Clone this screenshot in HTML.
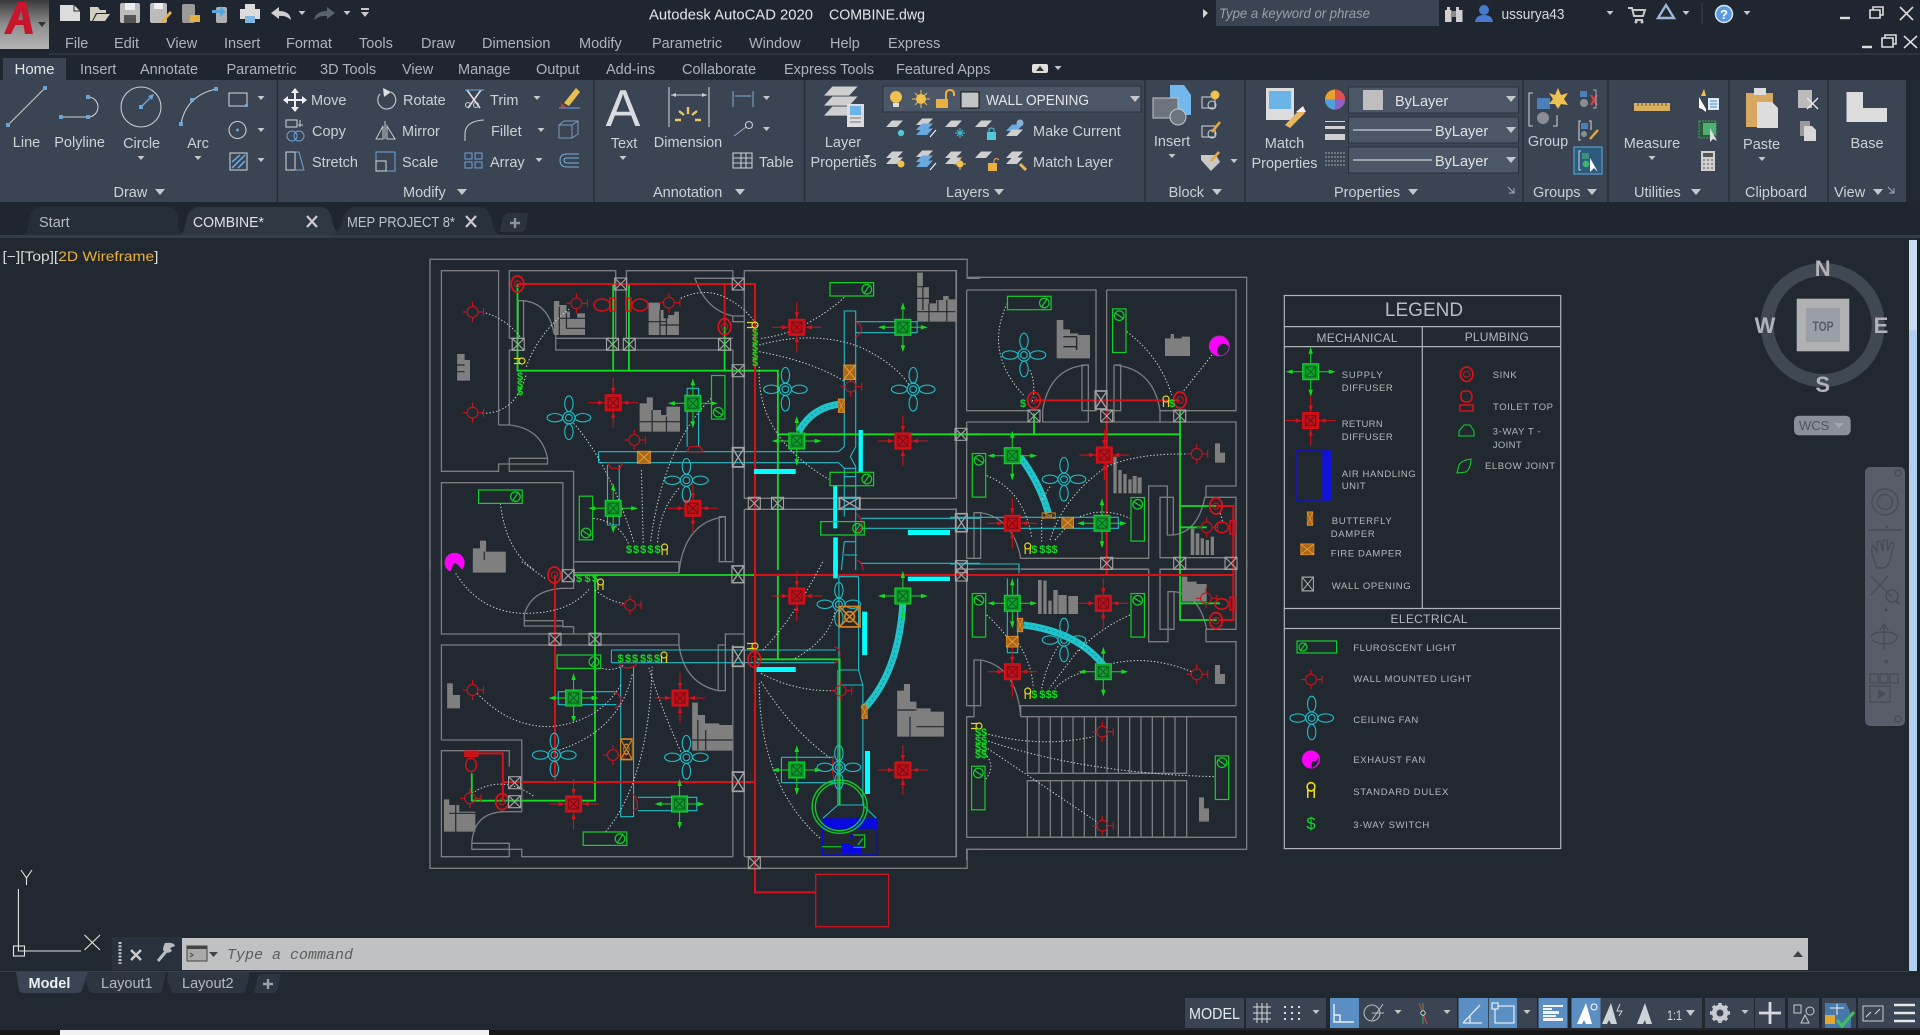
<!DOCTYPE html>
<html lang="en"><head><meta charset="utf-8"><title>Autodesk AutoCAD 2020 COMBINE.dwg</title>
<style>
html,body{margin:0;padding:0;background:#212830;width:1920px;height:1035px;overflow:hidden}
svg{display:block;font-family:"Liberation Sans",sans-serif}
.t{fill:#ccd1d6;font-size:14.5px}.m{text-anchor:middle}
.n{fill:#aeb4ba;font-size:14.5px}
.z *{vector-effect:non-scaling-stroke}
.w{fill:none;stroke:#7d7d80;stroke-width:1.3}
.d{fill:none;stroke:#d4d4d4;stroke-width:1;stroke-dasharray:1.4 2}
.c{fill:none;stroke:#20bcc6;stroke-width:1.1}
.r{fill:none;stroke:#d81018;stroke-width:2}
.g{fill:none;stroke:#12dc20;stroke-width:1.8}
.f{fill:#7f7f7f;stroke:none}
.b{fill:#00ffff;stroke:none}
.s{fill:#12dc20;font-size:11px;font-weight:bold;text-anchor:middle}
.l{fill:#b4b8bc;font-size:9.5px}
.h{fill:#b4b8bc;font-size:12px;text-anchor:middle}
.i{fill:none;stroke:#c8ccd0;stroke-width:1.1}
.u{fill:#3b4453}.a{fill:#5b8fc4}
</style></head><body>
<svg width="1920" height="1035" viewBox="0 0 1920 1035" xmlns="http://www.w3.org/2000/svg">
<defs>
<linearGradient id="lg" x1="0" y1="0" x2="0" y2="1"><stop offset="0" stop-color="#3a3a3c"/><stop offset=".5" stop-color="#8e8e8e"/><stop offset="1" stop-color="#b4b4b4"/></linearGradient>
<g id="ar"><path d="M-3.5,-2H3.5L0,2Z" fill="#c4c8cc"/></g>
<g id="al"><path d="M-5,-3H5L0,3Z" fill="#c4c8cc"/></g>
<g id="ds"><rect x="-8" y="-8" width="16" height="16" fill="#0fa02c" stroke="#12dc2c"/><path d="M-5,-5H5V5H-5ZM-5,-5L5,5M5,-5L-5,5" fill="none" stroke="#0c5c20"/><path d="M0,-8V-22M0,8V22M-8,0H-22M8,0H22" stroke="#12dc20" fill="none"/><path fill="#12dc20" d="M0,-25L-2.2,-18H2.2ZM0,25L-2.2,18H2.2ZM-25,0L-18,-2.2V2.2ZM25,0L18,-2.2V2.2Z"/></g>
<g id="rs"><rect x="-8" y="-8" width="16" height="16" fill="#c41018" stroke="#e01018"/><path d="M-5,-5H5V5H-5ZM-5,-5L5,5M5,-5L-5,5" fill="none" stroke="#701018"/><path d="M0,-8V-25M0,8V25M-8,0H-25M8,0H25" stroke="#d81018" fill="none"/><path fill="#d81018" d="M0,-9L-2.2,-15H2.2ZM0,9L-2.2,15H2.2ZM-9,0L-15,-2.2V2.2ZM9,0L15,-2.2V2.2Z"/></g>
<g id="fan" fill="none" stroke="#1fc0ca" stroke-width="1.1"><circle r="6"/><circle r="3.4"/><ellipse cy="-14" rx="4.2" ry="7.8"/><ellipse cy="14" rx="4.2" ry="7.8"/><ellipse cx="-14" rx="7.8" ry="4.2"/><ellipse cx="14" rx="7.8" ry="4.2"/></g>
<g id="wl" fill="none" stroke="#c8141e" stroke-width="1.1"><circle r="5.4"/><path d="M0,-10V-5M0,5V10M-10,0H-5M5,0H11M11,-4V4"/></g>
<g id="fl" fill="none" stroke="#12d028" stroke-width="1.2"><rect x="-21.8" y="-6.7" width="43.6" height="13.4"/><circle cx="15" r="4.8"/><path d="M12,4.5L18,-4.5"/></g>
<g id="wo" fill="none" stroke="#a4a4a4" stroke-width="1.1"><rect x="-6" y="-6" width="12" height="12"/><path d="M-6,-6L6,6M6,-6L-6,6"/></g>
<g id="fd"><rect x="-6.5" y="-6" width="13" height="12" fill="#a8681c" stroke="#e08820"/><path d="M-6.5,-6L6.5,6M6.5,-6L-6.5,6" stroke="#e8a030" fill="none"/></g>
<g id="fo" fill="none" stroke="#d88420" stroke-width="1"><rect x="-6.5" y="-6" width="13" height="12"/><path d="M-6.5,-6L6.5,6M6.5,-6L-6.5,6"/><circle r="3"/></g>
<g id="si" fill="none" stroke="#dc1018"><ellipse rx="6.3" ry="8" stroke-width="1.8"/><circle r="3.2"/></g>
<g id="du" fill="none" stroke="#e8d820" stroke-width="1.2"><circle cy="-3" r="3"/><path d="M-2.5,-2V5M2.5,-2V5"/></g>
<g id="lg1"><path d="M-5,-5H13L7,2H-11Z" fill="#cfcfcf"/></g>
<g id="lg2"><path d="M-3,-3.5H8L2,3H-9Z" fill="#cfcfcf"/></g>
<g id="lg4"><path d="M-3,-3.5H8L2,3H-9Z" fill="#6aa8e0"/></g>
</defs>

<!-- base -->
<rect width="1920" height="1035" fill="#212830"/>
<rect width="1920" height="80" fill="#1f2630"/>
<rect y="202" width="1920" height="33" fill="#1f2630"/>
<rect y="235" width="1920" height="3" fill="#333c49"/>
<line x1="49" y1="54" x2="1920" y2="54" stroke="#3a424e"/>

<!-- logo -->
<rect x="0" y="0" width="49" height="49" fill="url(#lg)"/>
<path d="M4,34L18,2H26L33,34H25L23.5,25H15.5L11,34ZM18,20H23L21.5,9Z" fill="#c8142c"/>
<path d="M38,22H46L42,27Z" fill="#333"/>

<!-- quick access -->
<path d="M60,5H74L80,11V21H60Z" fill="#dcdcdc"/><path d="M74,5V11H80" fill="none" stroke="#1f2630"/>
<path d="M90,7H98L100,10H106V13H96L92,21H90ZM97,14H110L105,21H93Z" fill="#d2d0c4"/>
<rect x="120" y="3" width="20" height="20" rx="2" fill="#bcbcbc"/><rect x="125" y="3" width="10" height="7" fill="#eee"/><rect x="124" y="15" width="12" height="8" fill="#555"/>
<rect x="150" y="3" width="17" height="20" rx="2" fill="#bcbcbc"/><rect x="154" y="3" width="9" height="6" fill="#eee"/><path d="M160,22L170,11L172,13L163,23Z" fill="#e8b040"/>
<rect x="182" y="4" width="13" height="19" rx="2" fill="#9a9a9a"/><path d="M190,15H200V22H190Z" fill="#e0b040"/>
<rect x="216" y="7" width="11" height="16" rx="2" fill="#b0b0b0"/><path d="M212,10H220V6L226,12L220,17V13H212Z" fill="#58a8e0"/>
<path d="M245,4H255V9H245ZM240,9H260V19H255V23H245V19H240Z" fill="#dcdcdc"/><rect x="245" y="16" width="10" height="7" fill="#7cb8e0"/>
<path d="M271,13L279,7V11Q290,11 291,20Q286,15 279,16V19Z" fill="#cfcfcf"/><use href="#ar" x="302" y="13"/>
<path d="M335,13L327,7V11Q316,11 314,20Q320,15 327,16V19Z" fill="#5a626c"/><use href="#ar" x="347" y="13"/>
<path d="M361,8H369V10H361ZM361,12H369L365,17Z" fill="#c8c8c8"/>

<!-- title -->
<text x="649" y="19.5" fill="#e4e6e8" font-size="15" textLength="164" lengthAdjust="spacingAndGlyphs">Autodesk AutoCAD 2020</text>
<text x="829" y="19.5" fill="#e4e6e8" font-size="15" textLength="96" lengthAdjust="spacingAndGlyphs">COMBINE.dwg</text>
<path d="M1203,9L1208,13L1203,18Z" fill="#d8d8d8"/>
<rect x="1216" y="0" width="223" height="26" fill="#3b4453"/>
<text x="1219" y="18" fill="#9aa0a8" font-size="14" font-style="italic" textLength="151" lengthAdjust="spacingAndGlyphs">Type a keyword or phrase</text>
<path d="M1447,7H1450V10H1451.5V22H1445V10H1447ZM1456,7H1459V10H1462.5V22H1456V10H1456Z" fill="#cfcfcf"/><rect x="1451" y="11" width="5" height="6" fill="#8a8a8a"/>
<circle cx="1484" cy="10" r="5" fill="#4a7ad0"/><path d="M1475,22Q1476,15 1484,15Q1492,15 1493,22Z" fill="#4a7ad0"/>
<text x="1501.5" y="19" fill="#d8dadc" font-size="14.5" textLength="63" lengthAdjust="spacingAndGlyphs">ussurya43</text>
<use href="#ar" x="1610" y="13"/>
<path d="M1628,8H1632L1634,16H1643L1645,10H1633M1635,20H1643" fill="none" stroke="#c8c8c8" stroke-width="2"/><circle cx="1636" cy="22" r="1.5" fill="#c8c8c8"/><circle cx="1642" cy="22" r="1.5" fill="#c8c8c8"/>
<path d="M1666,5L1674,18H1658Z" fill="none" stroke="#9fb4d8" stroke-width="2.4"/><use href="#ar" x="1686" y="13"/>
<line x1="1702" y1="3" x2="1702" y2="24" stroke="#3c4450"/>
<circle cx="1724" cy="14" r="8.5" fill="#5a9ae0" stroke="#d8e4f0" stroke-width="1.5"/><text x="1724" y="19" font-size="13" font-weight="bold" fill="#fff" text-anchor="middle">?</text>
<use href="#ar" x="1747" y="13"/>
<path d="M1840,18H1850" stroke="#dcdcdc" stroke-width="2.4"/>
<path d="M1870,10H1880V18H1870ZM1873,10V7H1883V15H1880" fill="none" stroke="#dcdcdc" stroke-width="1.6"/>
<path d="M1900,7L1913,20M1913,7L1900,20" stroke="#dcdcdc" stroke-width="1.6"/>
<path d="M1862,47H1872" stroke="#dcdcdc" stroke-width="2.4"/>
<path d="M1882,38H1893V47H1882ZM1885,38V35H1896V44H1893" fill="none" stroke="#dcdcdc" stroke-width="1.6"/>
<path d="M1904,36L1917,48M1917,36L1904,48" stroke="#dcdcdc" stroke-width="1.6"/>

<!-- menu -->
<text class="n" y="48"><tspan x="65">File</tspan><tspan x="114">Edit</tspan><tspan x="166">View</tspan><tspan x="224">Insert</tspan><tspan x="286">Format</tspan><tspan x="359">Tools</tspan><tspan x="421">Draw</tspan><tspan x="482">Dimension</tspan><tspan x="579">Modify</tspan><tspan x="652">Parametric</tspan><tspan x="749">Window</tspan><tspan x="830">Help</tspan><tspan x="888">Express</tspan></text>

<!-- ribbon tabs -->
<rect x="3" y="58" width="63" height="22" fill="#3b4453"/>
<text x="14.5" y="74" fill="#e4e6e8" font-size="15">Home</text>
<text class="n" y="74"><tspan x="80">Insert</tspan><tspan x="140">Annotate</tspan><tspan x="226.5">Parametric</tspan><tspan x="320">3D Tools</tspan><tspan x="402">View</tspan><tspan x="458">Manage</tspan><tspan x="536">Output</tspan><tspan x="606">Add-ins</tspan><tspan x="682">Collaborate</tspan><tspan x="784">Express Tools</tspan><tspan x="896">Featured Apps</tspan></text>
<rect x="1032" y="64" width="16" height="9" rx="2" fill="#e0e0e0"/><path d="M1036,71L1040,66L1044,71Z" fill="#333"/><use href="#ar" x="1058" y="68"/>

<!-- ribbon panels -->
<rect x="0" y="80" width="1906" height="122" class="u"/>
<path d="M277.5,80V202M594,80V202M804.5,80V202M1145,80V202M1245,80V202M1523,80V202M1608,80V202M1729,80V202M1828,80V202" stroke="#272e38" stroke-width="1.5"/>
<text class="t m" y="147"><tspan x="26.5">Line</tspan><tspan x="79.6">Polyline</tspan><tspan x="688">Dimension</tspan><tspan x="843">Layer</tspan><tspan x="1172" y="146">Insert</tspan><tspan x="1548" y="146">Group</tspan></text>
<text class="t m" y="148"><tspan x="141.6">Circle</tspan><tspan x="198">Arc</tspan><tspan x="624">Text</tspan><tspan x="1284.5">Match</tspan><tspan x="1652">Measure</tspan><tspan x="1761.6" y="149">Paste</tspan><tspan x="1867" y="148">Base</tspan></text>
<text class="t m" y="167"><tspan x="843.5">Properties</tspan><tspan x="1284.5" y="168">Properties</tspan></text>
<text class="t" y="105"><tspan x="311">Move</tspan><tspan x="403">Rotate</tspan><tspan x="490">Trim</tspan></text>
<text class="t" y="136"><tspan x="312">Copy</tspan><tspan x="402">Mirror</tspan><tspan x="491">Fillet</tspan><tspan x="1033">Make Current</tspan></text>
<text class="t" y="167"><tspan x="312">Stretch</tspan><tspan x="402">Scale</tspan><tspan x="490">Array</tspan><tspan x="759">Table</tspan><tspan x="1033">Match Layer</tspan></text>
<text class="t" y="197"><tspan x="113.5">Draw</tspan><tspan x="403">Modify</tspan><tspan x="653">Annotation</tspan><tspan x="946">Layers</tspan><tspan x="1168.6">Block</tspan><tspan x="1334">Properties</tspan><tspan x="1533">Groups</tspan><tspan x="1634">Utilities</tspan><tspan x="1745">Clipboard</tspan><tspan x="1834">View</tspan></text>
<use href="#al" x="160" y="192"/><use href="#al" x="462" y="192"/><use href="#al" x="740" y="192"/><use href="#al" x="999" y="192"/><use href="#al" x="1217" y="192"/><use href="#al" x="1413" y="192"/><use href="#al" x="1592" y="192"/><use href="#al" x="1696" y="192"/><use href="#al" x="1878" y="192"/>
<use href="#ar" x="141" y="158"/><use href="#ar" x="198" y="158"/><use href="#ar" x="623" y="158"/><use href="#ar" x="1172" y="156"/><use href="#ar" x="1652" y="158"/><use href="#ar" x="1762" y="159"/><use href="#ar" x="867" y="157"/>
<use href="#ar" x="261" y="98"/><use href="#ar" x="261" y="130"/><use href="#ar" x="261" y="160"/><use href="#ar" x="537" y="98"/><use href="#ar" x="541" y="130"/><use href="#ar" x="539" y="160"/><use href="#ar" x="766.5" y="98"/><use href="#ar" x="766.5" y="129"/><use href="#ar" x="1234" y="161"/>
<path d="M1508,187L1514,193M1509,193H1514V188M1888,187L1894,193M1889,193H1894V188" stroke="#aab" fill="none"/>

<!-- draw icons -->
<path d="M8,125L45,88" class="i"/><rect x="43" y="86" width="4" height="4" fill="#6ba4d8"/><rect x="6" y="123" width="4" height="4" fill="#6ba4d8"/>
<path d="M61,117H88A10,10 0 0 0 88,97" class="i"/><rect x="59" y="115" width="4" height="4" fill="#6ba4d8"/><rect x="86" y="115" width="4" height="4" fill="#6ba4d8"/><rect x="86" y="95" width="4" height="4" fill="#6ba4d8"/>
<circle cx="141" cy="107" r="20" class="i"/><path d="M141,107L153,95" stroke="#6ba4d8" stroke-width="1.4"/><rect x="139" y="105" width="4" height="4" fill="#6ba4d8"/><path d="M154,94L148,96L152,100Z" fill="#6ba4d8"/>
<path d="M181,124Q186,96 216,89" class="i"/><rect x="179" y="122" width="4" height="4" fill="#6ba4d8"/><rect x="190" y="98" width="4" height="4" fill="#6ba4d8"/><rect x="214" y="87" width="4" height="4" fill="#6ba4d8"/>
<rect x="229" y="93" width="18" height="13" class="i"/><rect x="245" y="104" width="3" height="3" fill="#6ba4d8"/>
<circle cx="237.5" cy="130" r="8.5" class="i"/><circle cx="237.5" cy="130" r="1.5" fill="#6ba4d8"/>
<rect x="230" y="153" width="17" height="17" class="i"/><path d="M232,168L245,155M232,162L240,155M238,168L245,161" stroke="#6ba4d8" stroke-width="1.6"/>
<!-- modify icons -->
<path d="M295,90V110M285,100H305" stroke="#eee" stroke-width="2"/><path d="M295,88L291,93H299ZM295,112L291,107H299ZM283,100L288,96V104ZM307,100L302,96V104Z" fill="#eee"/>
<rect x="286" y="120" width="11" height="7" class="i"/><circle cx="292" cy="136" r="5" fill="none" stroke="#6ba4d8"/><circle cx="299" cy="136" r="5" fill="none" stroke="#6ba4d8"/><path d="M300,120V127M298,125H303" stroke="#ccc"/>
<rect x="286" y="152" width="9" height="18" class="i"/><path d="M295,152H299L304,170H295" fill="none" stroke="#6ba4d8"/>
<path d="M391,92A9,9 0 1 1 380,94" class="i"/><path d="M383,88L391,92L384,97Z" fill="#ddd"/>
<path d="M385,121V139M383,139H376ZM383,126L376,139H383ZM387,126L395,139H387Z" fill="none" stroke="#c8ccd0"/>
<rect x="376" y="152" width="19" height="19" fill="none" stroke="#6ba4d8"/><rect x="376" y="161" width="10" height="10" class="i"/>
<path d="M467,90L480,108M481,90L468,108" stroke="#ddd" stroke-width="1.6"/><circle cx="468" cy="105" r="2.5" class="i"/><circle cx="476" cy="105" r="2.5" class="i"/><path d="M465,90H484" stroke="#6ba4d8"/>
<path d="M465,141V134Q465,121 484,120" class="i"/>
<g fill="none" stroke="#6ba4d8"><rect x="465" y="153" width="7" height="6"/><rect x="475" y="153" width="7" height="6"/><rect x="465" y="162" width="7" height="6"/><rect x="475" y="162" width="7" height="6"/></g>
<path d="M564,103L576,88L580,92L569,106Z" fill="#e8c050"/><path d="M561,103L566,107H561Z" fill="#d04030"/><path d="M559,108H580" stroke="#6ba4d8"/>
<path d="M559,125H572V138H559ZM559,125L564,121H578V134L572,138M572,125L578,121" fill="none" stroke="#7a9cc0"/>
<path d="M579,154H567Q560,154 560,160Q560,167 567,167H579M579,158H567Q564,158 564,160Q564,163 567,163H579" fill="none" stroke="#7ab0d8"/>
<!-- text -->
<text x="623" y="126" font-size="52" fill="#d8dce0" text-anchor="middle">A</text>
<!-- annotation -->
<path d="M669,87V127M709,87V127M671,95H707" class="i"/><path d="M671,95L676,93V97ZM707,95L702,93V97Z" fill="#ccc"/>
<g stroke="#e8c860" stroke-width="2.4"><path d="M688,107V114M679,111L684,115M697,111L692,115M675,120H681M695,120H701"/></g>
<path d="M733,91V107M753,91V107M735,96H751" stroke="#7ab0d8" fill="none"/>
<path d="M734,136L746,127" stroke="#9ab"/><circle cx="749" cy="125" r="3.5" class="i"/>
<g class="i"><rect x="733" y="153" width="19" height="15"/><path d="M733,158H752M733,163H752M741,153V168M746,153V168"/></g>
<!-- layers -->
<use href="#lg1" transform="translate(839.4,93) scale(1.4,1.3)"/><use href="#lg1" transform="translate(839.4,103) scale(1.4,1.3)"/><use href="#lg1" transform="translate(839.4,113) scale(1.4,1.3)"/>
<rect x="847" y="104" width="17" height="23" fill="#ddd"/><rect x="850" y="106" width="11" height="9" fill="#6ab4e8"/><path d="M850,118H861M850,122H861" stroke="#777"/>
<rect x="883" y="86" width="258" height="26" fill="#4b5667" stroke="#2b323d"/>
<circle cx="896" cy="97" r="6" fill="#f0c050"/><rect x="893" y="103" width="6" height="4" fill="#ddd"/>
<circle cx="921" cy="99" r="5" fill="#f0c050"/><path d="M921,90V108M912,99H930M915,93L927,105M927,93L915,105" stroke="#f0c050"/>
<rect x="936" y="99" width="12" height="9" fill="#e8b040"/><path d="M946,99V94Q946,90 950,90Q954,90 954,94V96" fill="none" stroke="#e8b040" stroke-width="2"/>
<rect x="961" y="92" width="18" height="16" fill="#c4c4c4" stroke="#111"/>
<text x="986" y="105" fill="#e4e6e8" font-size="14.5" textLength="103" lengthAdjust="spacingAndGlyphs">WALL OPENING</text>
<use href="#al" x="1135" y="99"/>
<use href="#lg2" x="895" y="124"/><circle cx="901" cy="133" r="3.2" fill="#50c8d8"/>
<use href="#lg2" x="925" y="122"/><use href="#lg4" x="925" y="127"/><use href="#lg4" x="925" y="132"/><path d="M930,137L936,130" stroke="#fff"/>
<use href="#lg2" x="954" y="124"/><path d="M960,128V138M955,133H965M957,130L963,136M963,130L957,136" stroke="#40c0d0"/>
<use href="#lg2" x="984" y="124"/><rect x="987" y="132" width="9" height="8" fill="#50c8d8"/><path d="M989,132V129Q991,127 994,129V132" stroke="#50c8d8" fill="none"/>
<use href="#lg4" x="1015" y="128"/><use href="#lg2" x="1015" y="133"/><circle cx="1020" cy="123" r="3.5" fill="#8ab0d8"/>
<use href="#lg2" x="895" y="155"/><use href="#lg2" x="895" y="161"/><circle cx="901" cy="164" r="3.5" fill="#f0c050"/>
<use href="#lg2" x="925" y="154"/><use href="#lg4" x="925" y="159"/><use href="#lg4" x="925" y="164"/><path d="M930,170L936,163" stroke="#fff"/>
<use href="#lg2" x="954" y="155"/><use href="#lg2" x="954" y="161"/><circle cx="960" cy="164" r="3.5" fill="#f0c050"/><path d="M960,158V170M954,164H966" stroke="#f0c050"/>
<use href="#lg2" x="984" y="155"/><rect x="988" y="163" width="9" height="8" fill="#e8b040"/><path d="M994,163V160Q996,157 999,160" stroke="#e8b040" fill="none"/>
<use href="#lg2" x="1015" y="155"/><use href="#lg2" x="1015" y="161"/><path d="M1020,164L1026,170" stroke="#e8b860" stroke-width="3"/>
<!-- block -->
<path d="M1170,85H1184L1191,95V115H1170Z" fill="#72b8ec"/><rect x="1153" y="98" width="25" height="20" fill="#6c7480" stroke="#c8c8c8"/><circle cx="1178" cy="117" r="8" fill="#6c7480" stroke="#c8c8c8"/>
<rect x="1202" y="97" width="13" height="11" class="i"/><circle cx="1212" cy="105" r="4" class="i"/><circle cx="1215" cy="95" r="4.5" fill="#f0c050"/>
<rect x="1202" y="126" width="13" height="11" class="i"/><circle cx="1212" cy="134" r="4" class="i"/><path d="M1212,132L1220,122" stroke="#e8a840" stroke-width="2.6"/>
<path d="M1201,155H1216L1220,162L1211,171L1201,160Z" fill="#c8c8c8"/><path d="M1211,161L1219,152" stroke="#e8a840" stroke-width="2.6"/>
<use href="#ar" x="1234" y="161"/>
<!-- match props -->
<rect x="1266" y="88" width="28" height="32" fill="#ddd"/><rect x="1269" y="91" width="22" height="18" fill="#6ab4e8"/><path d="M1285,125L1301,108L1305,113L1290,128Z" fill="#e8b860"/><path d="M1296,112L1303,106L1306,112Z" fill="#eee"/>
<!-- properties -->
<circle cx="1335" cy="99.5" r="10" fill="#e8a030"/><path d="M1335,99.5L1335,89.5A10,10 0 0 1 1345,99.5Z" fill="#e05050"/><path d="M1335,99.5L1345,99.5A10,10 0 0 1 1335,109.5Z" fill="#9060c8"/><path d="M1335,99.5L1335,109.5A10,10 0 0 1 1325,99.5Z" fill="#50a0e0"/>
<path d="M1325,121H1345V122H1325ZM1325,126H1345V129H1325ZM1325,134H1345V140H1325Z" fill="#d0d0d0"/>
<path d="M1325,153H1345M1325,157H1345M1325,161H1345M1325,165H1345" stroke="#9aa" stroke-dasharray="2 1"/>
<g fill="#4b5667" stroke="#2b323d"><rect x="1348.5" y="87" width="170" height="26"/><rect x="1348.5" y="117" width="170" height="26"/><rect x="1348.5" y="147" width="170" height="26"/></g>
<rect x="1363" y="90" width="20" height="20" fill="#bebebe"/>
<text x="1395" y="106" class="t" style="fill:#e0e2e4">ByLayer</text>
<text x="1435" y="136" class="t" style="fill:#e0e2e4">ByLayer</text><text x="1435" y="166" class="t" style="fill:#e0e2e4">ByLayer</text>
<path d="M1353,130H1432M1353,160H1432" stroke="#eee"/>
<use href="#al" x="1511" y="99"/><use href="#al" x="1511" y="130"/><use href="#al" x="1511" y="160"/>
<!-- groups -->
<path d="M1533,93H1529V126H1533M1553,126H1557V115" class="i"/><rect x="1537" y="98" width="13" height="11" fill="#4a80b8"/><circle cx="1543" cy="118" r="6" fill="#8a8e94"/>
<path d="M1558,88L1561,95L1568,93L1564,99L1568,105L1561,104L1558,109L1555,104L1549,104L1553,99L1549,93L1555,95Z" fill="#f0c050"/>
<rect x="1580" y="91" width="7" height="6" fill="#4a80b8"/><circle cx="1584" cy="103" r="4" fill="#8a8e94"/><path d="M1591,95L1597,105M1597,95L1591,105" stroke="#e04040" stroke-width="2"/><path d="M1593,90H1596V108H1593" fill="none" stroke="#aab"/>
<path d="M1581,121H1579V140H1581M1589,121H1591V130" class="i"/><rect x="1581" y="123" width="7" height="6" fill="#4a80b8"/><circle cx="1584" cy="134" r="3" fill="#8a8e94"/><path d="M1590,139L1598,130" stroke="#e8a840" stroke-width="2.4"/>
<rect x="1574" y="147" width="28" height="27" fill="#2c5a7c" stroke="#58b0e0"/><rect x="1582" y="153" width="7" height="6" fill="#3c9080"/><circle cx="1586" cy="164" r="3.4" fill="#44b070"/><path d="M1590,158V172L1594,168L1598,172Z" fill="#fff"/><path d="M1581,151H1579V170H1581" class="i"/>
<!-- utilities -->
<rect x="1634" y="103" width="36" height="8" fill="#d8b060"/><path d="M1638,103V106M1642,103V106M1646,103V106M1650,103V106M1654,103V106M1658,103V106M1662,103V106M1666,103V106" stroke="#6a5a30"/>
<path d="M1699,97L1706,109V112L1702,109L1699,108Z" fill="#fff"/><path d="M1704,89L1701,96H1706Z" fill="#f0c050"/><rect x="1708" y="98" width="11" height="12" fill="#dde8f0"/><path d="M1710,101H1717M1710,104H1717M1710,107H1717" stroke="#4a90d0"/>
<rect x="1699" y="121" width="17" height="17" fill="#2a5a3a" stroke="#40a060" stroke-dasharray="2 1"/><rect x="1703" y="123" width="13" height="12" fill="#4cae70"/><path d="M1710,128V142L1713,139L1717,141Z" fill="#ddd"/>
<rect x="1701" y="151" width="14" height="20" fill="#cfcfcf"/><rect x="1703" y="153" width="10" height="4" fill="#555"/><path d="M1703,160H1713M1703,164H1713M1703,168H1713" stroke="#555" stroke-dasharray="2 2"/>
<!-- clipboard -->
<rect x="1746" y="93" width="27" height="34" fill="#d8a860"/><rect x="1754" y="88" width="12" height="7" fill="#ddd"/><path d="M1757,102H1772L1778,108V128H1757Z" fill="#ddd"/>
<rect x="1798" y="90" width="14" height="18" fill="#bbb"/><path d="M1807,98L1818,109M1818,98L1807,109" stroke="#e8e8e8" stroke-width="1.4"/>
<rect x="1800" y="121" width="10" height="15" fill="#9a9a9a"/><path d="M1804,126H1812L1816,130V141H1804Z" fill="#d8d8d8"/>
<path d="M1846.5,92H1863V108H1887V122H1846.5Z" fill="#dcdcdc"/>

<!-- file tabs -->
<path d="M21,235Q27,235 28,225Q30,207 42,207H168Q178,207 178,220Q178,235 186,235Z" fill="#262e38"/>
<path d="M178,235Q184,235 186,222Q188,207 200,207H320Q330,207 332,220Q334,232 342,235Z" fill="#2f3743"/>
<path d="M332,235Q340,232 342,220Q346,207 356,207H478Q490,207 492,222Q494,232 500,235Z" fill="#29313c"/>
<path d="M501,225Q503,213 510,213H528L526,228Q525,232 520,232H500Z" fill="#2b333e"/>
<text y="227" font-size="14.5"><tspan x="39" fill="#b4bac0">Start</tspan><tspan x="193" fill="#dfe2e6" textLength="71" lengthAdjust="spacingAndGlyphs">COMBINE*</tspan><tspan x="347" fill="#bcc2c8" textLength="108" lengthAdjust="spacingAndGlyphs">MEP PROJECT 8*</tspan></text>
<path d="M307,216L317,227M317,216L307,227M466,216L476,227M476,216L466,227" stroke="#c8ccd0" stroke-width="2.2"/>
<path d="M515,218V228M510,223H520" stroke="#8a929c" stroke-width="2.4"/>

<!-- canvas label -->
<text x="2.5" y="261" font-size="13.5" fill="#d8dadc" textLength="156" lengthAdjust="spacingAndGlyphs">[−][Top][<tspan fill="#e8b040">2D Wireframe</tspan>]</text>

<!-- PLAN z4 -->
<g class="z" transform="translate(420,250) scale(.357143,.333333)">
<path class="w" d="M28,960V28H1532V85H1568"/>
<path class="w" d="M220,525V62H60V664H220V642H250V664H430V935H725M250,525H220M250,525Q340,535 357,625M250,625H357V642H250ZM250,525V300H275M250,265H290M250,265V62H548V265H380V300H876M380,265V165M578,265V62H876V85H770Q800,180 876,198H908V215H876V198M578,265H876M876,85V62M908,198V62H1502V745H908V215M876,300V935H838V800H855V935M855,800Q740,815 725,968M908,778V960M908,778H1502V960M275,152V265M290,152V265M275,152H290Q360,160 375,250M60,960V698H400V960"/>
<path class="f" d="M375,153H390V165H410V185H420V205H440V190H462V255H375ZM640,158H672V180H682V205H695V195H712V185H725V255H640ZM1392,68H1408V110H1425V160H1445V150H1465V138H1480V148H1500V215H1392ZM104,312H125V330H140V392H104ZM615,460H635V442H652V480H675V495H690V470H728V545H615ZM148,895H168V872H185V905H240V960H148Z"/>
<path d="M390,170V255M390,205H462M410,190V235H462M672,180V255M640,215H690M690,205V255M672,225H725M1408,110V180M1392,110H1425M1392,145H1425M1425,160V215M1392,185H1500M1450,150V185M1475,150V215M650,480V545M615,515H728M690,500V545M104,345H125M104,365H125M180,905V960M148,935H240" stroke="#212830" stroke-width="1.2" fill="none"/>
<path class="c" d="M1188,590V183H1220V590M1220,215H1392V248H1220M500,605H1172M500,638H1172M500,605V638M1172,605L1188,590M1220,590L1205,620L1220,650V960M1172,638L1188,655V800M1180,960L1188,875M1188,655H1220M1188,680H1220M1188,708H1220M1188,745H1220M1188,775H1220M1188,875H1220M1188,915H1225M748,590V415H780V590M525,645V825H558V645M1235,805H1568M1235,835H1568M1235,940H1568"/>
<path d="M1220,215Q1238,225 1236,240Q1235,252 1220,262M748,605L755,590H785L792,605ZM525,640H568L560,655H535ZM1222,790Q1240,810 1238,835Q1236,830 1222,850M1225,930Q1242,945 1240,960" fill="none" stroke="#c81420" stroke-width="1.2"/>
<path class="g" d="M273,102V362H1002V960M541,102V362M585,102V362M853,230V362M1002,553H1568"/>
<path class="r" d="M273,102H938V960M853,102V230"/>
<path d="M1060,545Q1100,470 1178,462" fill="none" stroke="#22c4cc" stroke-width="7"/>
<path d="M1060,545Q1100,470 1178,462" fill="none" stroke="#0e9098" stroke-width="1" stroke-dasharray="2 3"/>
<path class="b" d="M1228,540H1240V668H1228ZM935,657H1052V672H935ZM1157,705H1168V835H1157ZM1157,862H1170V960H1157ZM1366,840H1484V855H1366Z"/>
<path class="d" d="M175,186Q240,205 280,260M175,490Q270,490 298,370M298,350Q330,250 420,175M730,145Q800,110 860,145Q920,180 945,230M955,265Q1000,260 1060,235M1075,225Q1140,190 1190,140M950,285Q1100,240 1230,290Q1330,340 1370,405M950,305Q1100,335 1190,395M950,350Q940,560 1145,688M430,520Q530,640 600,880M620,660L625,880M815,445Q680,590 645,880M725,715Q670,780 665,880M485,805Q560,815 585,885M225,760Q240,900 320,960"/>
</g>
<!-- PLAN z5 -->
<g class="z" transform="translate(420,560) scale(.357143,.333333)">
<path class="w" d="M28,0V925H1532V868H1568M60,0V222H430V200H400V182H292V198H400M292,198V165Q310,90 400,85H430V5H725V38H430M400,0V30M725,255V222H430M60,540V255H725M725,255Q740,370 835,392H855V222H908V890M835,392V255H855M876,255V890H285V868H250V890H60V572H250V620M60,540H285V755H232Q150,760 145,850H250V868H145V850M908,890H1502V0M908,0V222"/>
<path class="f" d="M148,0H240V38H148ZM76,370H92V405H112V445H76ZM762,428H778V465H798V490H838V495H875V572H762ZM1336,392H1355V372H1372V425H1390V445H1430V455H1467V530H1336ZM67,718H82V735H110V755H155V815H67Z"/>
<path d="M778,480V570M800,510V570M762,540H875M1336,450H1390M1390,500H1467M1372,470V530M82,760H155M100,735V815" stroke="#212830" stroke-width="1.2" fill="none"/>
<path class="c" d="M536,270H1165M536,308H1165M536,270V308M562,320V770H598V320M387,395H550M387,434H550M387,395V434M610,712H775V752H610M1012,592H1160M1012,668H1160M1012,592V668M1173,50V330M1228,50V330M1173,50H1228M1173,330H1228M1170,330V375M1228,330L1240,375M1170,375H1240M1170,375V735M1240,375V735M1170,735H1240M1170,735L1128,775M1240,735L1278,775"/>
<path d="M1160,260Q1178,265 1176,285Q1174,305 1160,310M545,395Q568,410 562,430Q556,440 545,445M596,702Q612,720 608,745L596,752M1160,585Q1150,620 1160,660M560,310H605Q608,320 580,324Q558,322 560,310Z" fill="none" stroke="#c81420" stroke-width="1.2"/>
<rect x="1127" y="775" width="153" height="30" fill="#0808e0"/>
<rect x="1127" y="805" width="153" height="80" fill="none" stroke="#0808d0" stroke-width="1.2"/>
<path d="M1180,850H1205V880H1180ZM1205,858H1235V880H1205ZM1205,825H1215V835H1205Z" fill="#0808e0"/>
<ellipse cx="1175" cy="740" rx="77" ry="80" fill="none" stroke="#12c828" stroke-width="1.4"/>
<ellipse cx="1175" cy="740" rx="68" ry="72" fill="none" stroke="#12c828" stroke-width="1.4"/>
<path d="M1213,825H1245V862H1213M1226,855L1240,835M1125,860H1180" fill="none" stroke="#12c828" stroke-width="1.2"/>
<path class="g" d="M430,45H1002V298M490,45V722H145V640M943,298H1175V735"/>
<path class="r" d="M938,0V997H1108M378,45V660M232,666H938M142,580H232V725M940,45H1568"/>
<rect x="1108" y="943" width="204" height="157" fill="none" stroke="#c81420" stroke-width="1.3"/>
<rect x="125" y="573" width="37" height="17" fill="#c81018" stroke="#e01018"/><ellipse cx="143" cy="615" rx="15" ry="20" fill="none" stroke="#d81018" stroke-width="1.4"/>
<path d="M1352,130Q1340,340 1240,450" fill="none" stroke="#22c4cc" stroke-width="7"/>
<path d="M1352,130Q1340,340 1240,450" fill="none" stroke="#0e9098" stroke-width="1" stroke-dasharray="2 3"/>
<path class="b" d="M1157,0H1170V55H1157ZM1366,50H1484V63H1366ZM1238,155H1252V285H1238ZM942,321H1052V336H942ZM1246,573H1260V702H1246Z"/>
<path class="d" d="M100,40Q170,160 295,160Q420,160 475,85M285,5L350,55M490,90Q530,125 570,130M160,400Q250,500 360,500Q500,490 565,370M390,570Q560,510 595,340M520,815Q640,660 650,320M730,575Q670,430 640,320M510,325Q540,335 570,315M960,270Q1050,170 1130,0M1050,295Q1160,230 1165,130M955,340Q1050,395 1160,392M955,365Q1040,510 1150,595M950,370Q950,670 1120,835M145,700Q230,640 320,710"/>
</g>
<!-- PLAN z6 -->
<g class="z" transform="translate(950,270) scale(.333333)">
<path class="w" d="M50,22H890V900M50,60H438V422H415V285H396V422H415V456H278V420Q300,290 415,285M50,60V422H238M50,456H238M50,456V865H92V728H72V865M92,728Q190,745 212,865H596V648H652V795H670V682H630V863H858V682H768V648H858V456H630V422M470,60H858V422H630Q610,295 492,285H512V422H492V285M470,60V422H492V456H630M670,795Q745,785 765,680M50,897H210M212,897H596M630,897H858M18,0V680M18,715V900"/>
<path class="f" d="M320,150H340V178H360V190H385V195H420V265H320ZM645,205H662V192H672V205H695V200H720V258H645ZM795,520H810V548H825V578H795ZM490,560H500V670H490ZM505,600H515V670H505ZM520,612H530V670H520ZM535,628H545V670H535ZM548,618H560V670H548ZM563,622H575V670H563ZM722,775H733V855H722ZM737,790H748V855H737ZM752,805H762V855H752ZM767,810H777V855H767ZM782,800H792V855H782Z"/>
<path d="M340,200H380M340,230H380M380,200V240" stroke="#212830" stroke-width="1.4" fill="none"/>
<path class="c" d="M0,742H505V775H0M0,882H207V897"/>
<path class="g" d="M0,493H690M252,430V493M690,420V900M690,708H798M690,772H770"/>
<path class="r" d="M252,391H690M470,391V900M798,708H850V900M850,772"/>
<rect x="840" y="752" width="16" height="40" fill="none" stroke="#d81018" stroke-width="1.6"/><ellipse cx="815" cy="772" rx="20" ry="16" fill="none" stroke="#d81018" stroke-width="1.6"/>
<path d="M210,560Q270,640 295,730" fill="none" stroke="#22c4cc" stroke-width="7"/>
<path d="M210,560Q270,640 295,730" fill="none" stroke="#0e9098" stroke-width="1" stroke-dasharray="2 3"/>
<path class="d" d="M172,100Q100,250 225,380M240,300Q260,350 245,400M530,185Q630,260 665,375M695,370L790,250M110,617Q220,660 245,800M300,650L275,690M275,750L275,820M300,810Q340,680 470,590Q560,550 710,552M315,810L350,770M390,740Q460,710 540,745M810,730Q820,750 815,760"/>
</g>
<!-- PLAN z7 -->
<g class="z" transform="translate(950,560) scale(.333333)">
<path class="w" d="M890,0V868H50V900M18,0V890M50,28V437H92V300H72V437M92,300Q200,320 212,470V437H858M72,437V470H50V832H858V470H212M212,28H596V245H654V95H672V208H630V28H858V208H768V245H858V437M50,28H72M672,95Q750,105 770,208"/>
<path class="w" d="M232,470V640H710V470M232,662H710V832H232ZM267,470V640M301,470V640M335,470V640M369,470V640M403,470V640M437,470V640M471,470V640M505,470V640M539,470V640M573,470V640M607,470V640M641,470V640M675,470V640M267,662V832M301,662V832M335,662V832M369,662V832M403,662V832M437,662V832M471,662V832M505,662V832M539,662V832M573,662V832M607,662V832M641,662V832M675,662V832"/>
<path class="f" d="M695,50H712V65H740V72H770V125H695ZM795,315H810V342H825V372H795ZM747,712H762V745H777V785H747ZM264,60H275V162H264ZM280,62H290V162H280ZM295,122H305V162H295ZM310,90H323V162H310ZM325,105H350V162H325ZM355,108H384V162H355Z"/>
<path class="c" d="M0,12H207V40M172,55V278H203V55"/>
<path class="g" d="M690,0V180H800M690,130H810"/>
<path class="r" d="M0,45H850V180H810M470,0V45M850,0V45"/>
<rect x="840" y="112" width="16" height="38" fill="none" stroke="#d81018" stroke-width="1.6"/><ellipse cx="815" cy="132" rx="20" ry="16" fill="none" stroke="#d81018" stroke-width="1.6"/>
<path d="M220,195Q380,215 460,315" fill="none" stroke="#22c4cc" stroke-width="7"/>
<path d="M220,195Q380,215 460,315" fill="none" stroke="#0e9098" stroke-width="1" stroke-dasharray="2 3"/>
<path class="d" d="M110,165Q160,210 190,260M205,250Q245,310 250,385M330,250Q290,310 275,385M385,270L298,385M405,335Q350,350 315,385M490,310Q600,285 725,335M540,165Q440,210 385,275M105,520Q270,565 430,530M105,540Q400,640 795,650M105,560L440,785M105,580Q140,620 105,660"/>
</g>

<!-- plan symbols -->
<g>
<use href="#ds" x="902.9" y="327.3"/><use href="#ds" x="796.8" y="441"/><use href="#ds" x="692.9" y="403.3"/><use href="#ds" x="613.2" y="508.3"/><use href="#ds" x="573.6" y="698"/><use href="#ds" x="679.6" y="804"/><use href="#ds" x="902.9" y="596"/><use href="#ds" x="796.8" y="770"/><use href="#ds" x="1012.3" y="455.7"/><use href="#ds" x="1102" y="523.3"/><use href="#ds" x="1012.3" y="603.3"/><use href="#ds" x="1103.3" y="671.7"/>
<use href="#rs" x="796.8" y="327.3"/><use href="#rs" x="613.2" y="402.7"/><use href="#rs" x="902.9" y="441"/><use href="#rs" x="692.9" y="508.3"/><use href="#rs" x="796.8" y="596"/><use href="#rs" x="680" y="698"/><use href="#rs" x="573.6" y="804"/><use href="#rs" x="902.9" y="770"/><use href="#rs" x="1104.3" y="455"/><use href="#rs" x="1012.3" y="523.3"/><use href="#rs" x="1103.3" y="603.3"/><use href="#rs" x="1012.3" y="671.7"/>
<use href="#fan" x="785.4" y="389.3"/><use href="#fan" x="913.2" y="389.3"/><use href="#fan" x="568.9" y="417.7"/><use href="#fan" x="686.4" y="480.3"/><use href="#fan" x="838.9" y="604.3"/><use href="#fan" x="838.9" y="767.3"/><use href="#fan" x="554.3" y="755"/><use href="#fan" x="686.4" y="757.3"/><use href="#fan" x="1024" y="355"/><use href="#fan" x="1064" y="479.3"/><use href="#fan" x="1064" y="640"/>
<use href="#wl" x="472.5" y="312"/><use href="#wl" x="472.5" y="412.7"/><use href="#wl" x="576.4" y="303.3"/><use href="#wl" x="668.9" y="302.7"/><use href="#wl" x="634.3" y="440"/><use href="#wl" x="850.7" y="386.7"/><use href="#wl" x="630" y="605"/><use href="#wl" x="472.5" y="690"/><use href="#wl" x="612.9" y="755"/><use href="#wl" x="840.7" y="690.7"/><use href="#wl" x="470" y="798.3"/><use href="#wl" x="1196.7" y="454"/><use href="#wl" x="1206.7" y="527.3"/><use href="#wl" x="1102.3" y="731.7"/><use href="#wl" x="1102.3" y="825.7"/><use href="#wl" x="1196.7" y="674.3"/><use href="#wl" x="1206" y="598.3"/>
<use href="#fl" x="851.8" y="289.3"/><use href="#fl" x="500.4" y="496.7"/><use href="#fl" x="851.8" y="479"/><use href="#fl" x="842.5" y="528.3"/><use href="#fl" transform="translate(718.2,397.3) rotate(90)"/><use href="#fl" transform="translate(586,518) rotate(90)"/><use href="#fl" x="578.9" y="661.7"/><use href="#fl" x="605" y="838.7"/><use href="#fl" x="1029.3" y="303"/>
<use href="#fl" transform="translate(1119.3,330.7) rotate(-90)"/><use href="#fl" transform="translate(979,475.3) rotate(-90)"/><use href="#fl" transform="translate(1137.7,519.3) rotate(-90)"/><use href="#fl" transform="translate(979,615.3) rotate(-90)"/><use href="#fl" transform="translate(1137.7,615.3) rotate(-90)"/><use href="#fl" transform="translate(978.3,788) rotate(-90)"/><use href="#fl" transform="translate(1222,777.7) rotate(-90)"/>
<use href="#si" x="517.5" y="284"/><use href="#si" x="724.6" y="326.7"/><use href="#si" x="554.3" y="575"/><use href="#si" x="754.3" y="659.3"/><use href="#si" x="502.1" y="801.7"/><use href="#si" x="1034" y="400.3"/><use href="#si" x="1180" y="400"/><use href="#si" x="1216" y="506"/><use href="#si" x="1216" y="620.7"/>
<use href="#wo" x="620.7" y="284"/><use href="#wo" x="738.2" y="284"/><use href="#wo" x="518.2" y="344.3"/><use href="#wo" x="612.5" y="344.3"/><use href="#wo" x="629.3" y="344.3"/><use href="#wo" x="724.6" y="344.3"/><use href="#wo" x="738.2" y="370.7"/><use href="#wo" transform="translate(738.2,457.3) scale(1,1.6)"/><use href="#wo" x="754.3" y="503.3"/><use href="#wo" x="777.5" y="503.3"/><use href="#wo" transform="translate(849.6,503.3) scale(1.7,1)"/><use href="#wo" x="961" y="434.3"/><use href="#wo" transform="translate(961.4,522.7) scale(1,1.5)"/><use href="#wo" x="568.2" y="575.7"/><use href="#wo" transform="translate(737.9,574.3) scale(1,1.4)"/><use href="#wo" x="555" y="639.3"/><use href="#wo" x="595" y="639.3"/><use href="#wo" transform="translate(738.2,656.7) scale(1,1.6)"/><use href="#wo" x="514.6" y="782.7"/><use href="#wo" x="514.6" y="801.7"/><use href="#wo" transform="translate(738.2,781.7) scale(1,1.6)"/><use href="#wo" x="754.3" y="862.7"/><use href="#wo" x="961.4" y="566.7"/><use href="#wo" x="961.4" y="575"/><use href="#wo" x="1034" y="416"/><use href="#wo" transform="translate(1101,400) scale(1,1.5)"/><use href="#wo" x="1106.7" y="416"/><use href="#wo" x="1179.7" y="416"/><use href="#wo" x="1106.7" y="563.3"/><use href="#wo" x="1179.7" y="563.3"/><use href="#wo" x="1231" y="563.3"/>
<use href="#fd" x="643.9" y="457.3"/><use href="#fd" transform="translate(849.6,372.3) scale(.9,1.2)"/><use href="#fd" transform="translate(841.4,405.7) scale(.5,1.1)"/><use href="#fo" transform="translate(626.4,749.3) scale(.9,1.7)"/><use href="#fo" transform="translate(849.6,616.7) scale(1.6,1.7)"/><use href="#fd" transform="translate(864.6,711.7) scale(.45,1.1)"/><use href="#fo" transform="translate(1048.7,515.7) scale(1,.5)"/><use href="#fd" transform="translate(1067.7,522.7) scale(.9,.9)"/><use href="#fd" transform="translate(1012.3,641.7) scale(.9,.9)"/><use href="#fd" transform="translate(1020,625) scale(.45,1.1)"/>
<!-- toilets -->
<g fill="none" stroke="#d81018" stroke-width="1.5"><ellipse cx="602" cy="305" rx="8" ry="6"/><rect x="610" y="298" width="5" height="13"/><rect x="626" y="298" width="5" height="13"/><ellipse cx="640" cy="305" rx="8" ry="6"/></g>
<!-- exhaust -->
<circle cx="454.6" cy="562.7" r="10" fill="#ff00ff"/><path d="M454.6,562.7Q460,566 462,570Q456,576 450,572Q452,566 454.6,562.7Z" fill="#212830"/>
<circle cx="1219.3" cy="346" r="10" fill="#ff00ff"/><path d="M1219,346Q1224,341 1229,347Q1228,354 1222,356Q1214,354 1219,346Z" fill="#212830"/><circle cx="1219.3" cy="346" r="10" fill="none" stroke="#a030b0"/>
<!-- switches -->
<text class="s" y="553"><tspan x="629">$</tspan><tspan x="636">$</tspan><tspan x="643.2">$</tspan><tspan x="650.4">$</tspan><tspan x="657.5">$</tspan></text><use href="#du" x="664.6" y="550"/>
<text class="s" y="582"><tspan x="579">$</tspan><tspan x="587.5">$</tspan><tspan x="595">$</tspan></text><use href="#du" x="600.5" y="585"/>
<text class="s" y="662"><tspan x="620.5">$</tspan><tspan x="628">$</tspan><tspan x="635">$</tspan><tspan x="643">$</tspan><tspan x="649.5">$</tspan><tspan x="657">$</tspan></text><use href="#du" x="664" y="658"/>
<text class="s"><tspan x="520" y="380">$</tspan><tspan x="520" y="388">$</tspan><tspan x="520" y="395">$</tspan></text>
<text class="s"><tspan x="755" y="336">$</tspan><tspan x="755" y="344">$</tspan><tspan x="755" y="351">$</tspan><tspan x="755" y="359">$</tspan><tspan x="755" y="366">$</tspan></text>
<use href="#du" transform="translate(752,325) rotate(90)"/><use href="#du" transform="translate(519,361) rotate(90)"/><use href="#du" transform="translate(752,646) rotate(90)"/>
<text class="s" y="407" ><tspan x="1023">$</tspan><tspan x="1172">$</tspan></text><use href="#du" x="1166" y="402"/>
<text class="s" y="553"><tspan x="1034.3">$</tspan><tspan x="1042.3">$</tspan><tspan x="1048.7">$</tspan><tspan x="1054.7">$</tspan></text><use href="#du" x="1027.7" y="549"/>
<text class="s" y="698"><tspan x="1034.3">$</tspan><tspan x="1042.3">$</tspan><tspan x="1048.7">$</tspan><tspan x="1054.7">$</tspan></text><use href="#du" x="1027.7" y="694"/>
<use href="#du" transform="translate(976,726) rotate(90)"/>
<text class="s"><tspan x="978" y="736">$</tspan><tspan x="984" y="736">$</tspan><tspan x="978" y="744">$</tspan><tspan x="984" y="744">$</tspan><tspan x="978" y="751">$</tspan><tspan x="984" y="751">$</tspan><tspan x="978" y="758">$</tspan><tspan x="984" y="758">$</tspan></text>
</g>

<!-- LEGEND -->
<g fill="none" stroke="#b0b4b8" stroke-width="1.2"><rect x="1284.3" y="295.5" width="276.4" height="553.1"/><path d="M1284,326.6H1561M1284,346.6H1561M1284,608.5H1561M1284,628.5H1561M1422.3,326.6V608.5"/></g>
<text x="1424" y="316" fill="#b8bcc0" font-size="19" text-anchor="middle">LEGEND</text>
<text class="h" y="341.8" x="1357" textLength="81">MECHANICAL</text>
<text class="h" y="341" x="1496.7" textLength="64">PLUMBING</text>
<text class="h" y="623" x="1429" textLength="77">ELECTRICAL</text>
<g class="l">
<text x="1341.7" y="378" textLength="41">SUPPLY</text><text x="1341.7" y="391" textLength="51">DIFFUSER</text>
<text x="1341.7" y="426.9" textLength="41">RETURN</text><text x="1341.7" y="440.2" textLength="51">DIFFUSER</text>
<text x="1341.7" y="477" textLength="74">AIR HANDLING</text><text x="1341.7" y="489" textLength="24">UNIT</text>
<text x="1331.7" y="524.2" textLength="60">BUTTERFLY</text><text x="1330.7" y="537" textLength="44">DAMPER</text>
<text x="1330.7" y="556.4" textLength="71">FIRE DAMPER</text><text x="1331.7" y="589" textLength="79">WALL OPENING</text>
<text x="1492.7" y="378" textLength="24">SINK</text><text x="1493" y="410" textLength="60">TOILET TOP</text>
<text x="1492.7" y="434.6" textLength="48">3-WAY T -</text><text x="1492.7" y="448" textLength="29">JOINT</text>
<text x="1485" y="469" textLength="70">ELBOW JOINT</text>
<text x="1353.3" y="651" textLength="103">FLUROSCENT LIGHT</text><text x="1353.3" y="682" textLength="118">WALL MOUNTED LIGHT</text>
<text x="1353.3" y="722.9" textLength="65">CEILING FAN</text><text x="1353.3" y="763" textLength="72">EXHAUST FAN</text>
<text x="1353.3" y="795" textLength="95">STANDARD DULEX</text><text x="1353.3" y="828" textLength="76">3-WAY SWITCH</text>
</g>
<use href="#ds" x="1310.7" y="371.7"/><use href="#rs" x="1310.7" y="420.6"/>
<rect x="1296" y="451" width="35" height="49" fill="none" stroke="#1010d0" stroke-width="1.4"/><rect x="1322.3" y="451" width="8.7" height="49" fill="#1010d8"/>
<use href="#fd" transform="translate(1310,518.6) scale(.45,1.1)"/><use href="#fd" transform="translate(1307.3,549.3) scale(1,.9)"/>
<use href="#wo" transform="translate(1307.7,584) scale(.95,1.15)"/>
<use href="#si" transform="translate(1466.7,374.3) scale(1,.9)"/>
<path d="M1461,394Q1461,391 1466.7,391Q1472,391 1472,397Q1472,402 1466.7,402Q1461,402 1461,397ZM1460,405H1473V411H1460Z" fill="none" stroke="#dc1018" stroke-width="1.6"/>
<path d="M1459,436V431L1464,425H1470L1474,431V436Z" fill="none" stroke="#12d028" stroke-width="1.1"/>
<path d="M1457,473L1459,465Q1462,460 1471,459Q1471,468 1466,472L1457,473Z" fill="none" stroke="#12d028" stroke-width="1.1"/>
<g fill="none" stroke="#12d028" stroke-width="1.2"><rect x="1297" y="641" width="39.6" height="12"/><circle cx="1303" cy="647" r="4"/><path d="M1300,651L1306,643"/></g>
<use href="#wl" x="1311" y="679.6"/><use href="#fan" x="1311.7" y="718"/>
<circle cx="1311" cy="759.5" r="9" fill="#ff00ff"/><path d="M1313,761Q1317,762 1319,757Q1319,765 1312,768Q1310,764 1313,761Z" fill="#212830"/>
<use href="#du" transform="translate(1311,791) scale(1.3,1.4)"/>
<text x="1311" y="829" class="s" style="font-size:17px;font-weight:normal">$</text>

<!-- UCS -->
<g fill="none" stroke="#e4e4e4" stroke-width="1.1">
<path d="M18.4,889V951H81"/><rect x="13.5" y="946" width="11" height="10"/>
<path d="M21,870L26.5,878L32,870M26.5,878V885M84.5,935L100,950M100,935L84.5,950"/>
</g>

<!-- viewcube -->
<circle cx="1822.7" cy="325" r="55.5" fill="none" stroke="#404852" stroke-width="13"/>
<rect x="1796.7" y="298.7" width="52.6" height="52.6" fill="#b0b1b2"/><rect x="1806" y="308" width="34" height="34" fill="#9a9ea6"/>
<text x="1823" y="331" font-size="13.5" font-weight="bold" fill="#555e68" text-anchor="middle" textLength="21" lengthAdjust="spacingAndGlyphs">TOP</text>
<g font-size="22" font-weight="bold" fill="#b0b4b8" text-anchor="middle"><text x="1822.7" y="276">N</text><text x="1765" y="333">W</text><text x="1881" y="333">E</text><text x="1822.7" y="392">S</text></g>
<rect x="1794" y="415.7" width="56.7" height="19.6" rx="5" fill="#8a8f9a"/><text x="1799" y="430" font-size="13" fill="#4e5560">WCS</text><path d="M1834,423H1844L1839,428Z" fill="#a4a8b0"/>

<!-- nav bar -->
<rect x="1865" y="467" width="40" height="259" rx="5" fill="#575e69"/>
<g fill="none" stroke="#464d57" stroke-width="1.4">
<circle cx="1898" cy="473" r="3"/><circle cx="1898" cy="719" r="3"/>
<circle cx="1885" cy="502" r="13"/><circle cx="1885" cy="502" r="7.5"/>
<path d="M1868,530H1902M1874,560Q1870,548 1873,545L1877,552V542L1880,541L1883,551V540L1887,540L1888,551L1891,542L1894,544L1891,555Q1889,568 1883,568H1877Z"/>
<path d="M1871,576L1892,597M1888,576L1871,595"/><circle cx="1892" cy="596" r="6"/><path d="M1896,601L1899,604" stroke-width="2.4"/>
<path d="M1884,626V650M1880,630L1884,624L1888,630M1871,637Q1872,632 1884,632Q1896,632 1897,637Q1896,644 1884,644Q1876,643 1872,640"/>
<rect x="1870" y="674" width="8" height="9"/><rect x="1880" y="674" width="8" height="9"/><rect x="1890" y="674" width="8" height="9"/><rect x="1870" y="686" width="20" height="16"/>
</g>
<path d="M1886,607L1884,611H1888ZM1886,664L1884,660H1888ZM1885,526H1889L1887,529ZM1885,660H1889L1887,663ZM1878,689L1886,694L1878,699Z" fill="#464d57"/>

<!-- right blue strip -->
<rect x="1909" y="240" width="8" height="731" fill="#b0d0ee"/>
<rect x="1909" y="240" width="8" height="90" fill="#c8dcf2"/>
<rect x="1917" y="238" width="3" height="733" fill="#1a2028"/>

<!-- command line -->
<rect x="112" y="937" width="70" height="33" fill="#29313c"/>
<path d="M120,942V964" stroke="#c8c8c8" stroke-width="3" stroke-dasharray="2 1.4"/>
<path d="M131,950L141,960M141,950L131,960" stroke="#c8ccd0" stroke-width="2.4"/>
<path d="M158,961L168,949" stroke="#b8bcc0" stroke-width="3"/><path d="M165,943Q174,942 175,946L170,948L172,951Q167,955 163,950Q163,947 165,943Z" fill="#b8bcc0"/>
<rect x="182" y="938" width="1626" height="32" fill="#bfc1c2"/>
<rect x="187" y="946" width="20" height="15" fill="#aaa" stroke="#444"/><rect x="187" y="946" width="20" height="3" fill="#444"/><path d="M190,953L193,955L190,957" stroke="#444" fill="none"/>
<path d="M209,952H218L213.5,957Z" fill="#444"/>
<text x="227" y="959" font-family="Liberation Mono" font-style="italic" font-size="15" fill="#5c5c5c">Type a command</text>
<path d="M1793,957H1803L1798,951Z" fill="#444"/>
<rect y="971" width="1909" height="1" fill="#3a424e"/>

<!-- layout tabs -->
<path d="M16,972H88L82,990Q81,993 76,993H24Q20,993 19,990Z" class="u"/>
<path d="M88,972H166L162,990Q161,993 156,993H94Q90,993 89,990L85,980Z" fill="#2d3541"/>
<path d="M168,972H250L246,990Q245,993 240,993H176Q172,993 171,990L167,980Z" fill="#2d3541"/>
<path d="M258,976Q259,974 264,974H281L278,988Q277,993 272,993H254Z" fill="#2d3541"/>
<text x="28.5" y="988" font-size="14.5" font-weight="bold" fill="#eef0f2">Model</text>
<text y="988" font-size="14.5" fill="#b4bac0"><tspan x="101">Layout1</tspan><tspan x="182">Layout2</tspan></text>
<path d="M268,979V989M263,984H273" stroke="#9aa2ac" stroke-width="2.4"/>

<!-- status bar -->
<rect x="1185" y="998" width="59" height="30" class="u"/><rect x="1246" y="998" width="80" height="30" class="u"/><rect x="1330" y="998" width="127" height="30" class="u"/><rect x="1458.5" y="998" width="78.5" height="30" class="u"/><rect x="1538.5" y="998" width="29" height="30" class="u"/><rect x="1571.5" y="998" width="130.5" height="30" class="u"/><rect x="1705" y="998" width="49" height="30" class="u"/><rect x="1755" y="998" width="30" height="30" class="u"/><rect x="1788" y="998" width="31" height="30" class="u"/><rect x="1822" y="998" width="34" height="30" class="u"/><rect x="1858" y="998" width="62" height="30" class="u"/>
<rect x="1330" y="998" width="29" height="30" class="a"/><rect x="1458.5" y="998" width="29.5" height="30" class="a"/><rect x="1489" y="998" width="28" height="30" class="a"/><rect x="1538.5" y="998" width="29" height="30" class="a"/><rect x="1571.5" y="998" width="29" height="30" class="a"/>
<text x="1189" y="1019" font-size="15.5" fill="#e8eaec" textLength="51" lengthAdjust="spacingAndGlyphs">MODEL</text>
<path d="M1253,1007H1271M1253,1013H1271M1253,1019H1271M1257,1003V1023M1262,1003V1023M1267,1003V1023" stroke="#d8dadc"/>
<path d="M1284,1006h2v2h-2zM1291,1006h2v2h-2zM1298,1006h2v2h-2zM1284,1012h2v2h-2zM1291,1012h2v2h-2zM1298,1012h2v2h-2zM1284,1018h2v2h-2zM1291,1018h2v2h-2zM1298,1018h2v2h-2z" fill="#e0e0e0"/>
<use href="#ar" x="1316" y="1012"/>
<path d="M1334,1004V1022H1354M1334,1015H1340V1022" stroke="#fff" fill="none" stroke-width="1.2"/>
<path d="M1372,1013m-8,0a8,8 0 1 0 16,0a8,8 0 1 0 -16,0M1372,1020L1383,1004M1372,1013H1384" stroke="#b8bcc0" fill="none"/>
<use href="#ar" x="1398" y="1012"/>
<path d="M1419,1003L1427,1024" stroke="#d04040" stroke-width="1.2"/><path d="M1423,1003V1024" stroke="#30a050" stroke-width="1.2"/><circle cx="1423" cy="1013" r="2.2" fill="#2a3340" stroke="#ddd"/>
<use href="#ar" x="1447" y="1012"/>
<path d="M1463,1023H1482M1463,1023L1480,1005M1470,1015V1023" stroke="#dcebf8" fill="none" stroke-width="1.3"/>
<rect x="1495" y="1006" width="19" height="17" fill="none" stroke="#fff"/><rect x="1492" y="1003" width="6" height="6" fill="#5b8fc4" stroke="#fff"/>
<use href="#ar" x="1527" y="1012"/>
<path d="M1543,1005H1563V1007H1543ZM1543,1011H1559V1014H1543ZM1543,1018H1563V1021H1543ZM1543,1008H1552V1010H1543ZM1543,1015H1556V1017H1543Z" fill="#f0f4f8"/>
<path d="M1586,1003L1592,1024H1586L1584,1020L1582,1024H1577Z" fill="#fff"/><circle cx="1594" cy="1007" r="3" fill="none" stroke="#fff"/>
<path d="M1611,1003L1617,1024H1611L1609,1020L1607,1024H1602Z" fill="#d0d4d8"/><path d="M1620,1004L1617,1011H1622L1619,1016" fill="none" stroke="#d0d4d8"/>
<path d="M1645,1003L1652,1024H1646L1645,1020L1643,1024H1637Z" fill="#d0d4d8"/>
<text x="1667" y="1020" font-size="14" fill="#d8dadc" textLength="15" lengthAdjust="spacingAndGlyphs">1:1</text>
<path d="M1686,1010H1695L1690.5,1016Z" fill="#c4c8cc"/>
<circle cx="1720" cy="1013" r="5.8" fill="none" stroke="#c8ccd0" stroke-width="4.6"/><path d="M1720,1003V1007M1720,1019V1023M1710,1013H1714M1726,1013H1730M1713,1006L1716,1009M1724,1017L1727,1020M1727,1006L1724,1009M1716,1017L1713,1020" stroke="#c8ccd0" stroke-width="3.6"/>
<use href="#ar" x="1745" y="1012"/>
<path d="M1770,1002V1024M1759,1013H1781" stroke="#d8dadc" stroke-width="2.8"/>
<rect x="1794" y="1005" width="7" height="8" fill="none" stroke="#c8ccd0"/><circle cx="1810" cy="1011" r="4" fill="none" stroke="#c8ccd0"/><path d="M1801,1023L1805,1015L1809,1023Z" fill="none" stroke="#c8ccd0"/>
<path d="M1825,1003H1846L1851,1014V1028H1825Z" fill="#4878a8"/><path d="M1837,1004V1015M1830,1008H1844" stroke="#eee"/><rect x="1825" y="1015" width="10" height="9" fill="#e0a830"/><path d="M1837,1020L1842,1026L1854,1012" stroke="#40c060" stroke-width="3" fill="none"/>
<rect x="1863" y="1006" width="20" height="15" fill="none" stroke="#c8ccd0"/><path d="M1866,1017L1871,1012M1875,1014L1880,1009" stroke="#ddd"/>
<path d="M1894,1005H1915M1894,1013H1915M1894,1021H1915" stroke="#e4e6e8" stroke-width="2.4"/>

<!-- taskbar sliver -->
<rect y="1030" width="1920" height="5" fill="#161616"/>
<rect x="60" y="1030" width="429" height="5" fill="#f2f2f2"/>
</svg>
</body></html>
